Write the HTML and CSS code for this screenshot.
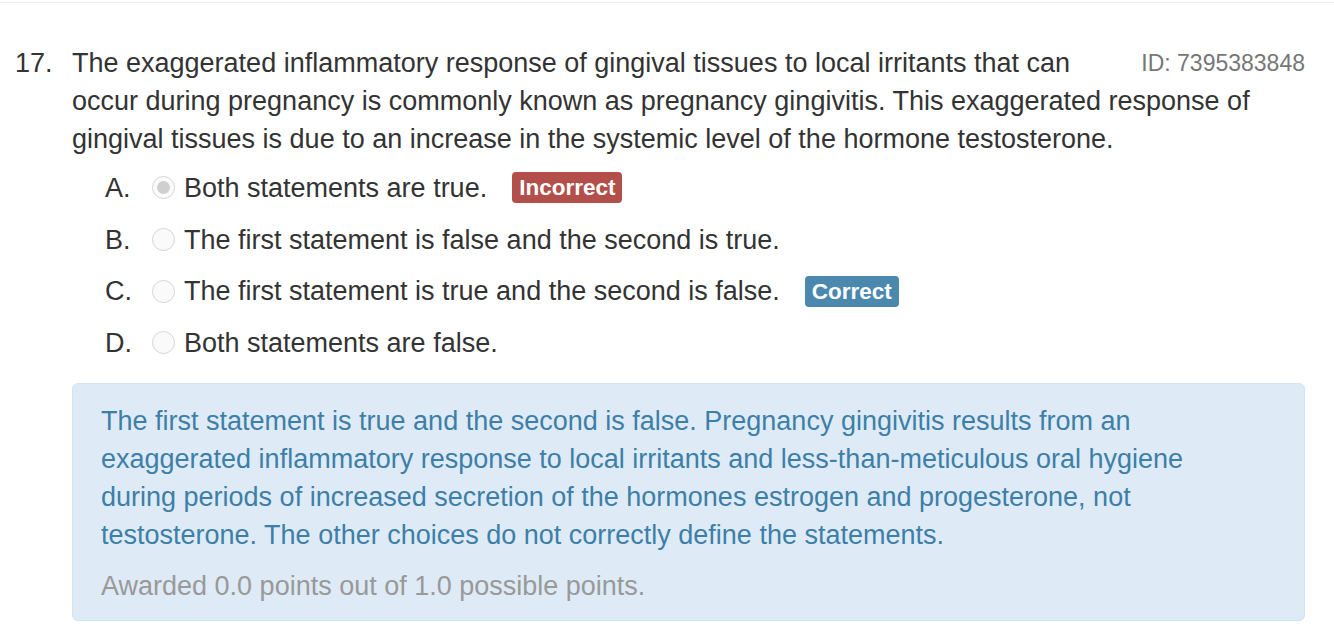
FILE: index.html
```html
<!DOCTYPE html>
<html>
<head>
<meta charset="utf-8">
<link rel="stylesheet" href="styles.css">
</head>
<body>
<div class="page">
  <div class="question">
    <div class="qnum">17.</div>
    <div class="qbody">
      <div class="qtext"><span class="qid">ID: 7395383848</span>The exaggerated inflammatory response of gingival tissues to local irritants that can occur during pregnancy is commonly known as pregnancy gingivitis. This exaggerated response of gingival tissues is due to an increase in the systemic level of the hormone testosterone.</div>
      <ol class="options">
        <li class="opt"><span class="letter">A.</span><span class="radio checked"></span><span class="otext">Both statements are true.</span><span class="badge bad">Incorrect</span></li>
        <li class="opt"><span class="letter">B.</span><span class="radio"></span><span class="otext">The first statement is false and the second is true.</span></li>
        <li class="opt"><span class="letter">C.</span><span class="radio"></span><span class="otext">The first statement is true and the second is false.</span><span class="badge good">Correct</span></li>
        <li class="opt"><span class="letter">D.</span><span class="radio"></span><span class="otext">Both statements are false.</span></li>
      </ol>
      <div class="alert">
        <p class="expl">The first statement is true and the second is false. Pregnancy gingivitis results from an exaggerated inflammatory response to local irritants and less-than-meticulous oral hygiene during periods of increased secretion of the hormones estrogen and progesterone, not testosterone. The other choices do not correctly define the statements.</p>
        <p class="points">Awarded 0.0 points out of 1.0 possible points.</p>
      </div>
    </div>
  </div>
</div>
</body>
</html>
```

FILE: styles.css
```css
html, body {
  margin: 0;
  padding: 0;
  background: #fff;
}
body {
  font-family: "Liberation Sans", Arial, Helvetica, sans-serif;
  font-size: 27px;
  line-height: 38px;
  color: #333;
}
.page {
  border-top: 1px solid #eeeeee;
  margin-top: 2px;
  padding: 41px 29px 0 15px;
}
.question {
  display: flex;
}
.qnum {
  width: 57px;
  flex: none;
}
.qbody {
  flex: 1;
  min-width: 0;
}
.qid {
  float: right;
  color: #777;
  font-size: 23px;
  margin-left: 40px;
}
.options {
  list-style: none;
  margin: 4px 0 0 0;
  padding: 0;
}
.opt {
  display: flex;
  align-items: center;
  height: 51.7px;
}
.letter {
  width: 33px;
  margin-left: 33px;
  flex: none;
}
.radio {
  width: 21px;
  height: 21px;
  border: 1px solid #d6d6d6;
  border-radius: 50%;
  background: #fafafa;
  box-sizing: content-box;
  margin: 0 9px 0 14px;
  flex: none;
  display: flex;
  align-items: center;
  justify-content: center;
}
.radio.checked::after {
  content: "";
  width: 13px;
  height: 13px;
  border-radius: 50%;
  background: #cfcfcf;
}
.badge {
  margin-left: 25px;
  color: #fff;
  font-weight: bold;
  font-size: 22.5px;
  line-height: 31px;
  padding: 0 7px;
  border-radius: 4px;
}
.badge.bad {
  background: #b24f4b;
}
.badge.good {
  background: #4a88ae;
}
.alert {
  margin-top: 14px;
  background: #deebf6;
  border: 1px solid #cde6f1;
  border-radius: 6px;
  padding: 18px 60px 15px 28px;
}
.expl {
  margin: 0;
  color: #3d7fa8;
}
.points {
  margin: 13px 0 0 0;
  color: #999;
}
```
